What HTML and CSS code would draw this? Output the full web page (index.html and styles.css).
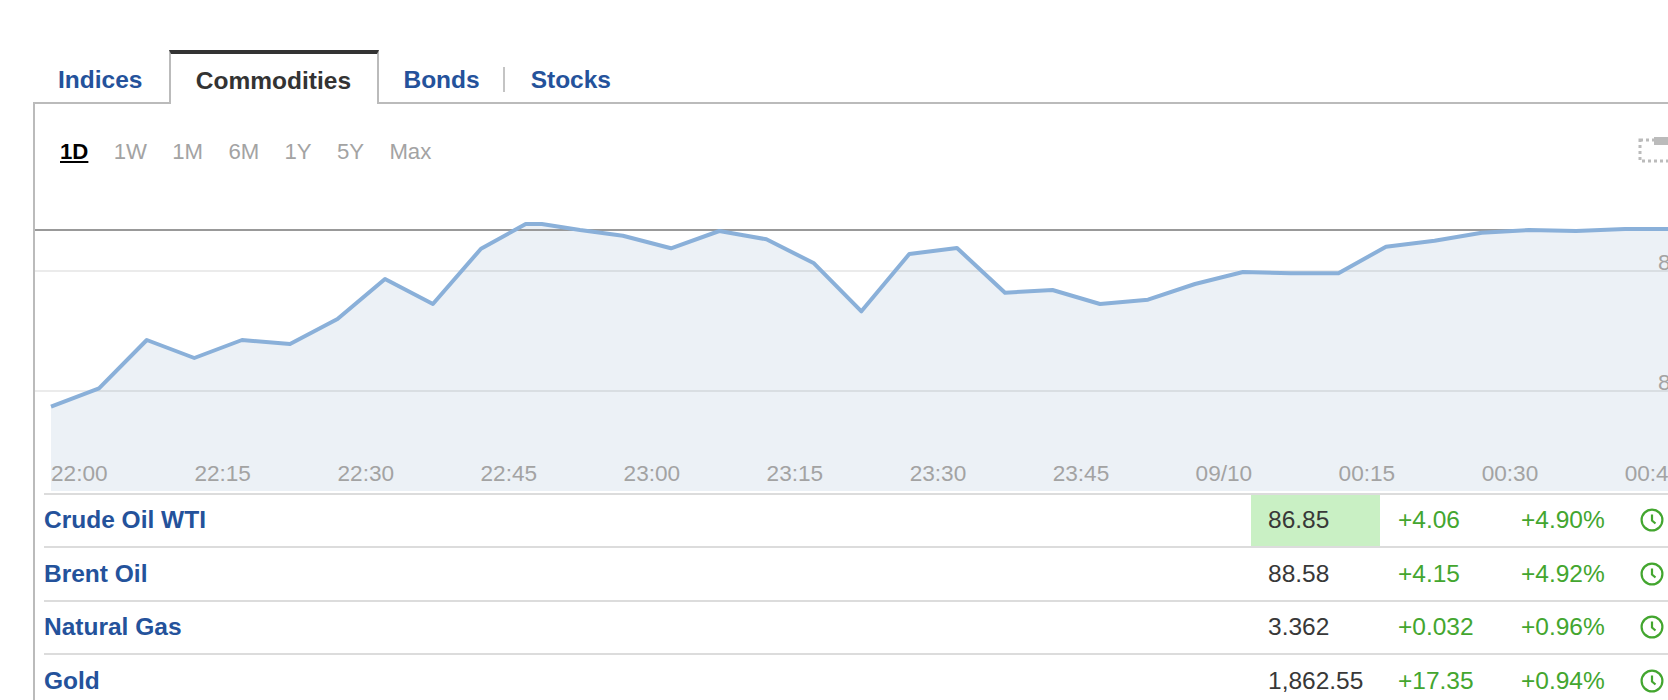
FILE: index.html
```html
<!DOCTYPE html>
<html lang="en">
<head>
<meta charset="utf-8">
<title>Commodities</title>
<link rel="stylesheet" href="styles.css">
</head>
<body>
<div class="widget">
  <nav class="tabs">
    <a class="tab indices">Indices</a>
    <a class="tab active">Commodities</a>
    <a class="tab bonds">Bonds</a>
    <span class="sep"></span>
    <a class="tab stocks">Stocks</a>
  </nav>
  <section class="panel">
    <div class="toolbar">
      <div class="ranges">
        <span class="range current">1D</span>
        <span class="range">1W</span>
        <span class="range">1M</span>
        <span class="range">6M</span>
        <span class="range">1Y</span>
        <span class="range">5Y</span>
        <span class="range">Max</span>
      </div>
      <svg class="expand" width="36" height="26" viewBox="0 0 36 26">
        <rect class="expand-dots" x="2" y="3" width="34" height="21"/>
        <rect class="expand-fill" x="16" y="0" width="20" height="8"/>
      </svg>
    </div>
    <svg class="chart" width="1665" height="281" viewBox="35 210 1665 281">
      <polygon class="area" points="51,406.7 99,388.3 146.8,340 194.3,358 242,340 290,344 337.5,319 385,279 432.9,304 481,248.7 525.7,224 541.8,224 580,230 622.9,235.7 671,248.3 719.3,231 766.4,239.3 814,263.3 861.4,311.3 909.3,254 957,248 1005,292.7 1052.5,290 1100,304 1148,299.7 1195,284 1243,272 1291,273.3 1338.5,273.3 1386,246.7 1434.6,240.7 1481.8,232.7 1529,230 1576,231 1625,229 1700,229 1700,491 51,491"/>
      <rect class="grid-top" x="35" y="229" width="1665" height="2"/>
      <rect class="grid" x="35" y="270" width="1665" height="2"/>
      <rect class="grid" x="35" y="390" width="1665" height="2"/>
      <polyline class="line" points="51,406.7 99,388.3 146.8,340 194.3,358 242,340 290,344 337.5,319 385,279 432.9,304 481,248.7 525.7,224 541.8,224 580,230 622.9,235.7 671,248.3 719.3,231 766.4,239.3 814,263.3 861.4,311.3 909.3,254 957,248 1005,292.7 1052.5,290 1100,304 1148,299.7 1195,284 1243,272 1291,273.3 1338.5,273.3 1386,246.7 1434.6,240.7 1481.8,232.7 1529,230 1576,231 1625,229 1700,229"/>
      <text class="axis" x="1658" y="270">87.00</text>
      <text class="axis" x="1658" y="390">86.00</text>
      <text class="axis" x="51" y="480.5">22:00</text>
      <text class="axis" x="194.4" y="480.5">22:15</text>
      <text class="axis" x="337.5" y="480.5">22:30</text>
      <text class="axis" x="480.5" y="480.5">22:45</text>
      <text class="axis" x="623.6" y="480.5">23:00</text>
      <text class="axis" x="766.6" y="480.5">23:15</text>
      <text class="axis" x="909.7" y="480.5">23:30</text>
      <text class="axis" x="1052.7" y="480.5">23:45</text>
      <text class="axis" x="1195.6" y="480.5">09/10</text>
      <text class="axis" x="1338.6" y="480.5">00:15</text>
      <text class="axis" x="1481.7" y="480.5">00:30</text>
      <text class="axis" x="1624.7" y="480.5">00:45</text>
    </svg>
    <div class="rows">
      <div class="row">
        <a class="name">Crude Oil WTI</a>
        <span class="value flash">86.85</span>
        <span class="change">+4.06</span>
        <span class="pct">+4.90%</span>
        <svg class="clock" width="24" height="24" viewBox="0 0 24 24"><circle cx="12" cy="12" r="10.4"/><path d="M12 6.5V12.5L15.5 15.5"/></svg>
      </div>
      <div class="row">
        <a class="name">Brent Oil</a>
        <span class="value">88.58</span>
        <span class="change">+4.15</span>
        <span class="pct">+4.92%</span>
        <svg class="clock" width="24" height="24" viewBox="0 0 24 24"><circle cx="12" cy="12" r="10.4"/><path d="M12 6.5V12.5L15.5 15.5"/></svg>
      </div>
      <div class="row">
        <a class="name">Natural Gas</a>
        <span class="value">3.362</span>
        <span class="change">+0.032</span>
        <span class="pct">+0.96%</span>
        <svg class="clock" width="24" height="24" viewBox="0 0 24 24"><circle cx="12" cy="12" r="10.4"/><path d="M12 6.5V12.5L15.5 15.5"/></svg>
      </div>
      <div class="row">
        <a class="name">Gold</a>
        <span class="value">1,862.55</span>
        <span class="change">+17.35</span>
        <span class="pct">+0.94%</span>
        <svg class="clock" width="24" height="24" viewBox="0 0 24 24"><circle cx="12" cy="12" r="10.4"/><path d="M12 6.5V12.5L15.5 15.5"/></svg>
      </div>
    </div>
  </section>
</div>
</body>
</html>
```
FILE: styles.css
```css
html, body {
  margin: 0;
  height: 700px;
  overflow: hidden;
  background: #fff;
}
body {
  font-family: "Liberation Sans", Arial, sans-serif;
  color: #383838;
}
.widget {
  width: 1668px;
  height: 700px;
  padding-top: 50px;
  box-sizing: border-box;
  overflow: hidden;
}
.tabs {
  display: flex;
  align-items: stretch;
  height: 52px;
  padding-left: 33px;
  position: relative;
  z-index: 1;
}
.tab {
  display: flex;
  align-items: center;
  padding: 8px 25px 0;
  font-size: 24.5px;
  font-weight: 700;
  color: #24529b;
}
.tab.indices {
  padding-left: 25px;
  padding-right: 25px;
}
.tab.active {
  box-sizing: border-box;
  width: 210px;
  height: 54px;
  padding: 4px 2px 0 0;
  justify-content: center;
  color: #333;
  background: #fff;
  border-top: 4px solid #333;
  border-left: 2px solid #bbb;
  border-right: 2px solid #bbb;
  margin-left: 2px;
}
.tab.bonds {
  padding-left: 24px;
  padding-right: 23px;
}
.sep {
  width: 2px;
  height: 25px;
  margin-top: 17px;
  background: #c4c4c4;
}
.tab.stocks {
  padding-left: 26px;
}
.panel {
  box-sizing: border-box;
  width: 1700px;
  margin-left: 33px;
  border-top: 2px solid #bbb;
  border-left: 2px solid #bbb;
}
.toolbar {
  display: flex;
  justify-content: space-between;
  height: 106px;
  padding: 0 59px 0 25px;
  box-sizing: border-box;
}
.ranges {
  display: flex;
  gap: 25.3px;
  height: 26px;
  margin-top: 35px;
  line-height: 26px;
  font-size: 22.2px;
  color: #a3a3a3;
}
.range.current {
  color: #000;
  font-weight: 700;
  text-decoration: underline;
}
.expand {
  margin-top: 33px;
}
.expand-dots {
  fill: none;
  stroke: #bbb;
  stroke-width: 3;
  stroke-dasharray: 3 3;
}
.expand-fill {
  fill: #bbb;
}
.chart {
  display: block;
}
.area {
  fill: #ecf1f6;
}
.grid-top {
  fill: #999;
}
.grid {
  fill: rgba(0, 0, 0, .08);
}
.line {
  fill: none;
  stroke: #8ab0d9;
  stroke-width: 4;
  stroke-linejoin: round;
}
.axis {
  font-size: 22.6px;
  fill: #a3a3a3;
}
.rows {
  margin: 1.5px 0 0 9px;
}
.row {
  display: flex;
  align-items: stretch;
  box-sizing: border-box;
  height: 53.6px;
  border-top: 2px solid #dcdcdc;
  font-size: 24.5px;
}
.row > span {
  display: flex;
  align-items: center;
  box-sizing: border-box;
}
.name {
  display: flex;
  align-items: center;
  flex: 0 0 1207px;
  font-weight: 700;
  color: #24529b;
}
.row > .value {
  flex: 0 0 129px;
  padding-left: 17px;
}
.flash {
  background: #c9f0c4;
}
.row > .change {
  flex: 0 0 141px;
  padding-left: 18px;
  color: #43a62f;
}
.row > .pct {
  flex: 0 0 119px;
  color: #43a62f;
}
.clock {
  align-self: center;
  fill: none;
  stroke: #43a62f;
  stroke-width: 2.2;
}
```
